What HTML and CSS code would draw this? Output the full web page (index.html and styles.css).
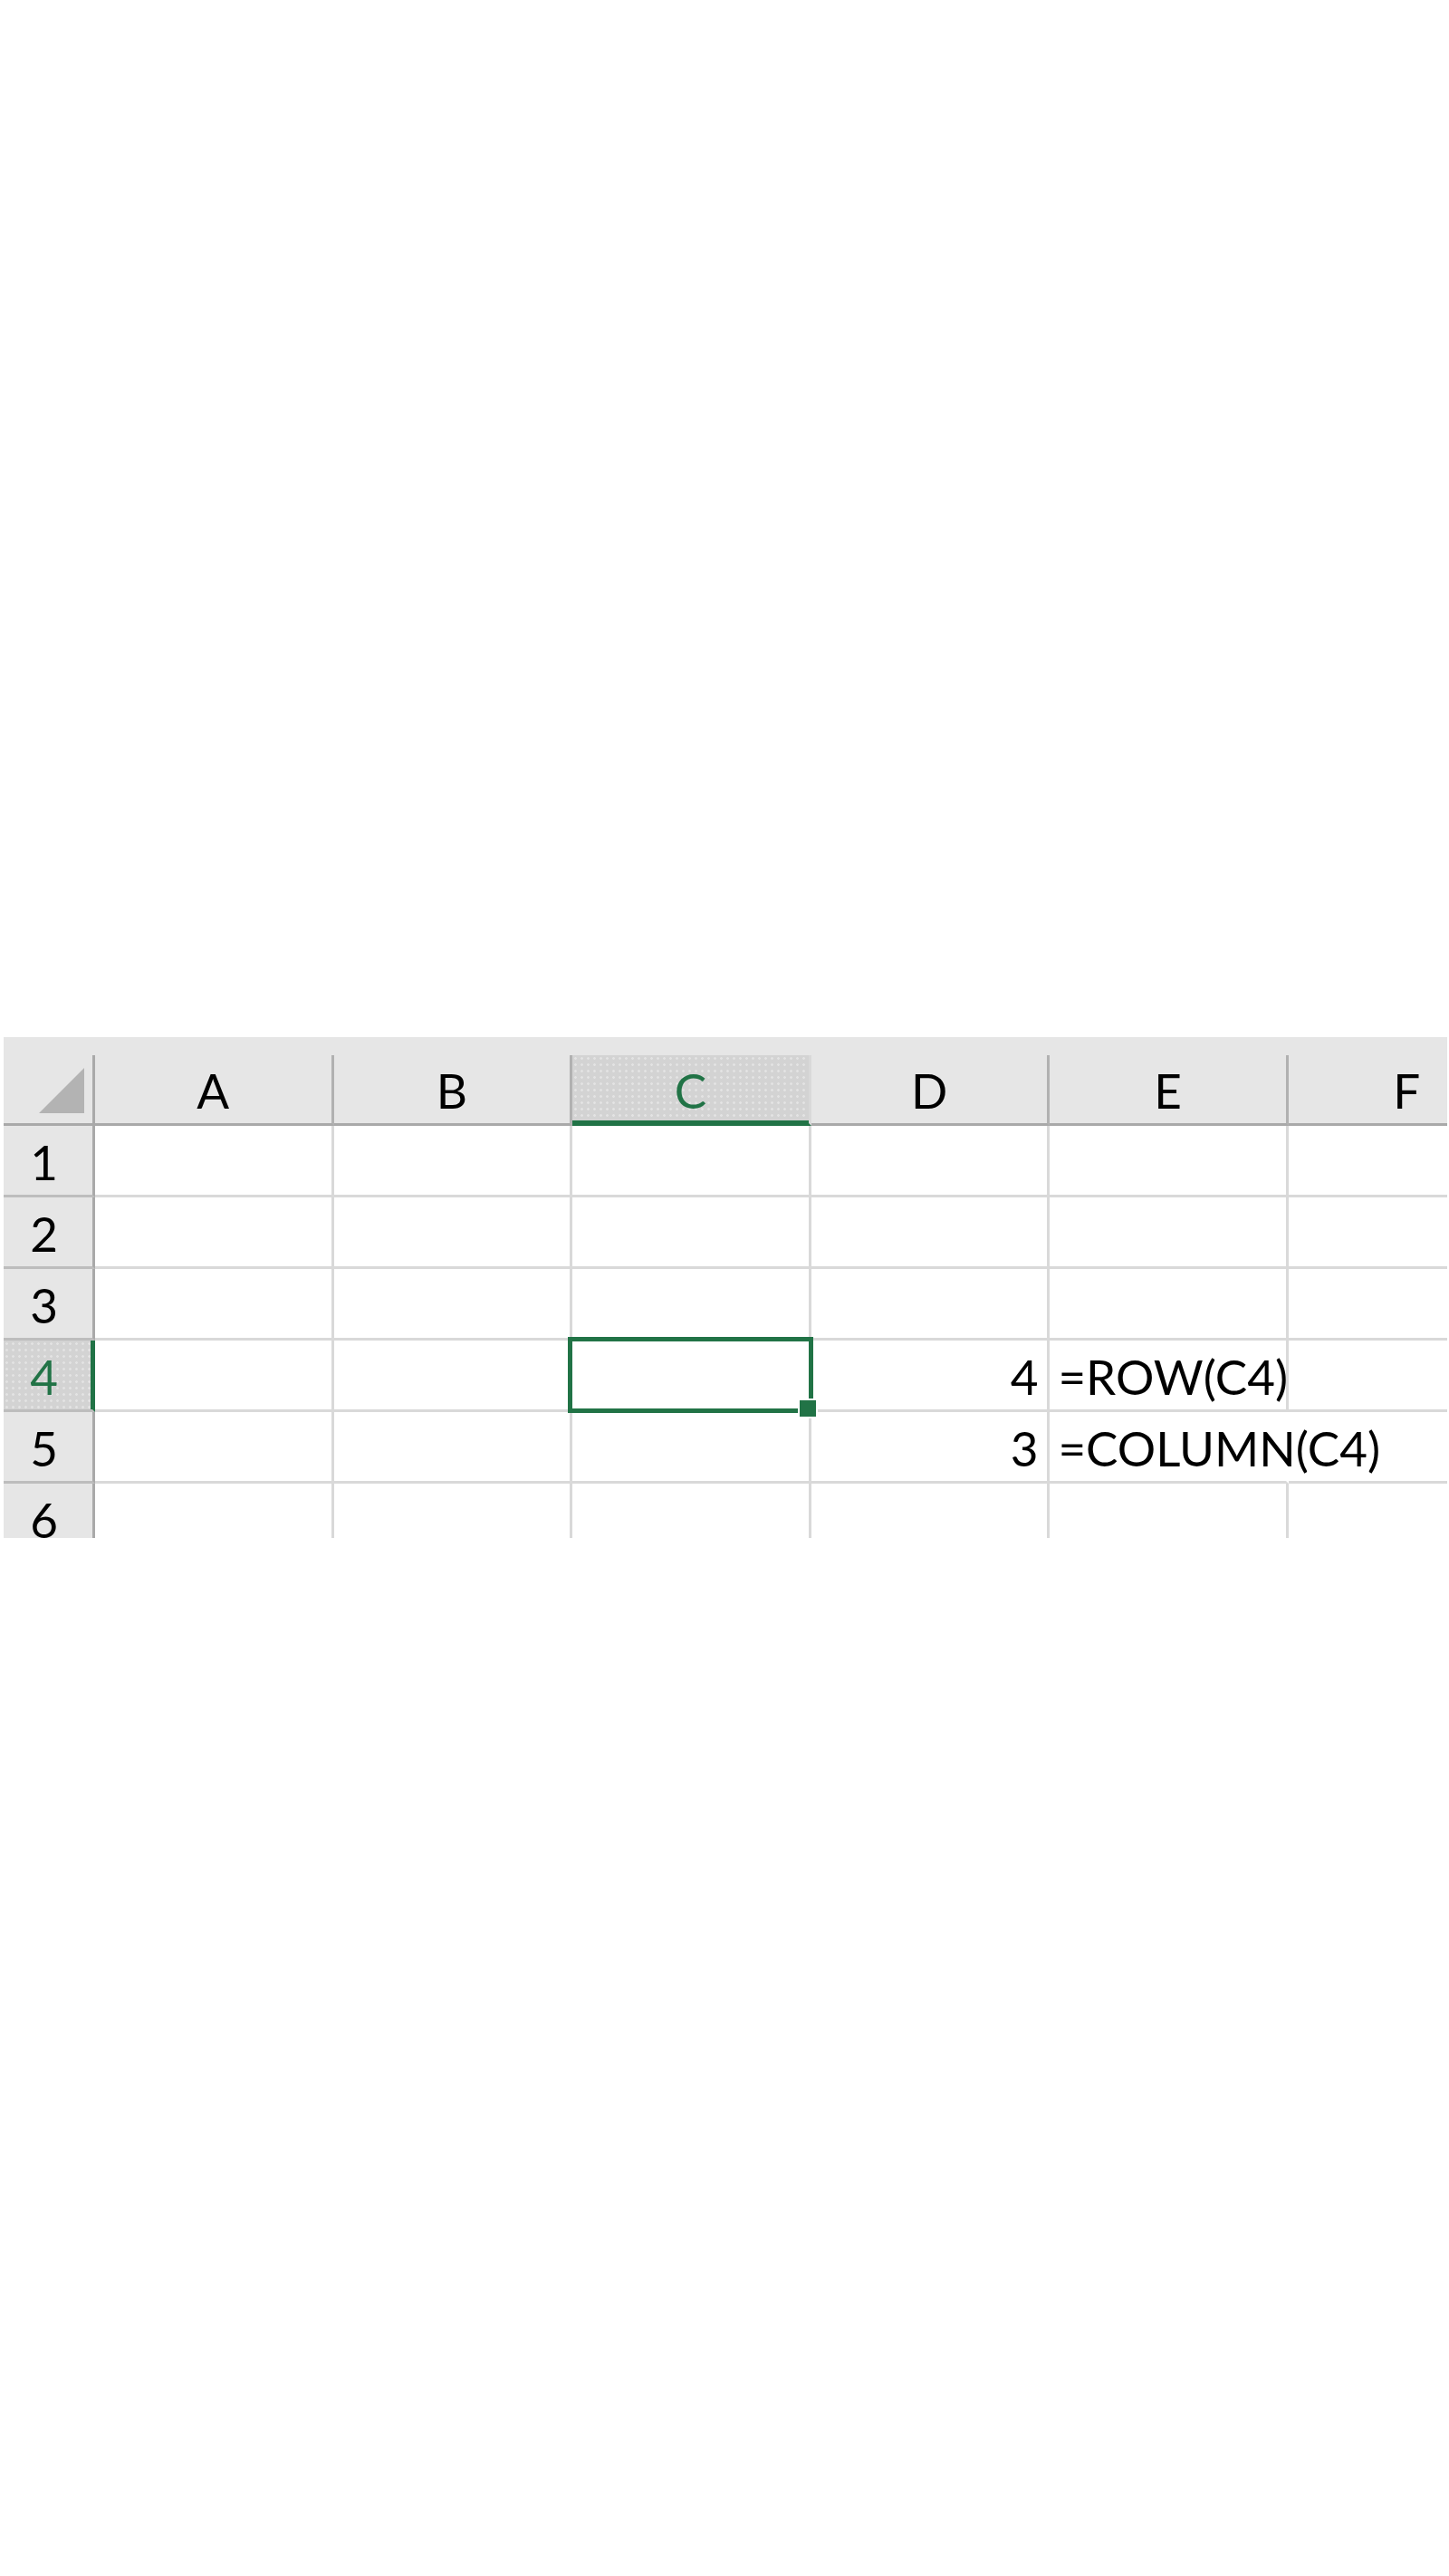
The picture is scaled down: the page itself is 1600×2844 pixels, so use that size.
FILE: index.html
```html
<!DOCTYPE html>
<html lang="en">
<head>
<meta charset="utf-8">
<title>ROW and COLUMN</title>
<link rel="stylesheet" href="styles.css">
</head>
<body>
<div class="sheet">
  <div class="topband"></div>
  <div class="row hrow">
    <div class="rh corner">
      <svg class="tri" width="52" height="52" viewBox="0 0 52 52"><polygon points="51,1 51,51 1,51" fill="#b3b3b3"/></svg>
    </div>
    <div class="ch">A</div>
    <div class="ch">B</div>
    <div class="ch sel">C</div>
    <div class="ch">D</div>
    <div class="ch">E</div>
    <div class="ch last">F</div>
  </div>
  <div class="row">
    <div class="rh">1</div>
    <div class="c"></div><div class="c"></div><div class="c"></div><div class="c"></div><div class="c"></div><div class="c last"></div>
  </div>
  <div class="row">
    <div class="rh">2</div>
    <div class="c"></div><div class="c"></div><div class="c"></div><div class="c"></div><div class="c"></div><div class="c last"></div>
  </div>
  <div class="row">
    <div class="rh">3</div>
    <div class="c"></div><div class="c"></div><div class="c"></div><div class="c"></div><div class="c"></div><div class="c last"></div>
  </div>
  <div class="row">
    <div class="rh rsel">4</div>
    <div class="c"></div><div class="c"></div>
    <div class="c active"><div class="selbox"></div><div class="handle"></div></div>
    <div class="c num">4</div>
    <div class="c txt">=ROW(C4)</div>
    <div class="c last"></div>
  </div>
  <div class="row">
    <div class="rh">5</div>
    <div class="c"></div><div class="c"></div><div class="c"></div>
    <div class="c num">3</div>
    <div class="c txt spill">=COLUMN(C4)</div>
    <div class="c last"></div>
  </div>
  <div class="row">
    <div class="rh">6</div>
    <div class="c"></div><div class="c"></div><div class="c"></div><div class="c"></div><div class="c"></div><div class="c last"></div>
  </div>
</div>
</body>
</html>
```

FILE: styles.css
```css
html, body {
  margin: 0;
  padding: 0;
  background: #ffffff;
}

body {
  min-height: 2844px;
  font-family: Lato, "Liberation Sans", sans-serif;
  color: #000;
}

.sheet {
  margin: 1145px 0 0 4px;
  width: 1594px;
  height: 553px;
  overflow: hidden;
  background: #ffffff;
}

.topband {
  height: 20px;
  background: #e6e6e6;
}

.row {
  display: flex;
  height: 79px;
}

.hrow {
  height: 78px;
}

.rh,
.ch,
.c {
  box-sizing: border-box;
  flex: 0 0 auto;
  font-size: 53px;
  line-height: 53px;
  white-space: nowrap;
  display: flex;
  align-items: flex-end;
  padding-bottom: 10px;
}

.rh {
  width: 101px;
  background: #e6e6e6;
  border-right: 3px solid #a9a9a9;
  border-bottom: 3px solid #bdbdbd;
  justify-content: center;
  padding-right: 9px;
}

.corner {
  border-bottom: 3px solid #a9a9a9;
  align-items: flex-start;
  justify-content: flex-end;
  padding: 13px 8px 0 0;
}

.tri {
  display: block;
}

.ch {
  width: 263.6px;
  background: #e6e6e6;
  border-right: 3px solid #b1b1b1;
  border-bottom: 3px solid #a9a9a9;
  justify-content: center;
}

.ch.sel,
.rh.rsel {
  background-color: #d3d3d3;
  background-image: radial-gradient(circle, #e3e3e3 1px, transparent 1.7px);
  background-size: 7px 7px;
  color: #217346;
}

.ch.sel {
  border-right-color: #d9d9d9;
  border-bottom-color: #217346;
  box-shadow: inset 0 -3px 0 #217346;
}

.rh.rsel {
  border-right-color: #217346;
  box-shadow: inset -2px 0 0 #217346;
}

.c {
  width: 263.6px;
  border-right: 3px solid #d9d9d9;
  border-bottom: 3px solid #d9d9d9;
}

.ch.last,
.c.last {
  flex: 0 0 auto;
  width: 263.6px;
}

.c.num {
  justify-content: flex-end;
  padding-right: 10px;
}

.c.txt {
  padding-left: 9px;
}

.c.spill {
  overflow: visible;
  border-right-color: transparent;
}

.c.active {
  position: relative;
}

.selbox {
  position: absolute;
  top: -4px;
  left: -5px;
  right: -5px;
  bottom: -4px;
  border: 5px solid #217346;
  z-index: 2;
}

.handle {
  position: absolute;
  right: -10px;
  bottom: -10px;
  width: 18px;
  height: 18px;
  background: #217346;
  border: 2px solid #ffffff;
  z-index: 3;
}
```
